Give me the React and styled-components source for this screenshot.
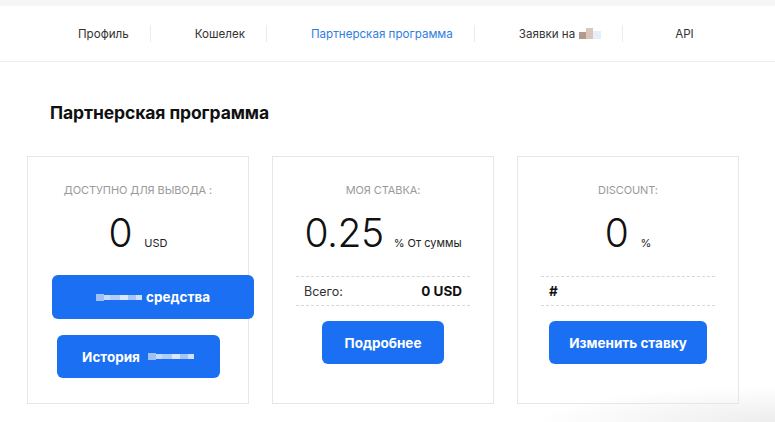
import React from "react";
import styled, { createGlobalStyle } from "styled-components";

const GlobalStyle = createGlobalStyle`
  html, body {
    margin: 0;
    padding: 0;
    background: #fff;
  }
  body {
    font-family: Inter, "Noto Sans", sans-serif;
    color: #1b1b1b;
  }
`;

const Page = styled.div`
  min-height: 422px;
  background: radial-gradient(ellipse 240px 36px at 100% 100%, #ededed, rgba(255, 255, 255, 0));
`;

const TopStrip = styled.div`
  height: 6px;
  background: #f6f6f6;
`;

const Nav = styled.nav`
  height: 55px;
  border-bottom: 1px solid #ededed;
  display: flex;
  align-items: center;
  padding-left: 78px;
`;

const NavItem = styled.a`
  display: flex;
  align-items: center;
  height: 17px;
  padding: 0 21px 0 44px;
  font-size: 11.6px;
  color: ${(p) => (p.$active ? "#2f7de1" : "#333")};
  border-right: 1px solid ${(p) => (p.$last ? "transparent" : "#ececec")};
  white-space: nowrap;
  text-decoration: none;
  &:first-child {
    padding-left: 0;
  }
  &:last-child {
    padding-left: 52px;
  }
`;

const Censor = styled.span`
  display: inline-flex;
  align-items: ${(p) => p.$align || "center"};
  margin: ${(p) => p.$margin || "0"};
`;

const Pix = styled.span`
  display: inline-block;
  width: ${(p) => p.$w}px;
  height: ${(p) => p.$h}px;
  background: ${(p) => p.$c};
`;

const Main = styled.main`
  padding: 0 0 0 27px;
`;

const Heading = styled.h1`
  margin: 0;
  padding: 40px 0 0 23px;
  height: 54px;
  line-height: 22px;
  font-size: 17.5px;
  font-weight: 700;
  color: #111;
  letter-spacing: -0.1px;
`;

const Cards = styled.div`
  display: flex;
  gap: 23px;
`;

const Card = styled.section`
  box-sizing: border-box;
  width: 222px;
  height: 248px;
  border: 1px solid #e6e6e6;
  padding: 26px 23px 0;
  display: flex;
  flex-direction: column;
  align-items: center;
`;

const Label = styled.div`
  font-size: 11px;
  line-height: 14px;
  color: #9a9a9a;
  text-transform: uppercase;
  letter-spacing: -0.1px;
`;

const ValueRow = styled.div`
  margin-top: 11px;
  height: 50px;
  display: flex;
  align-items: baseline;
  justify-content: center;
`;

const Big = styled.span`
  font-size: 39px;
  font-weight: 300;
  line-height: 50px;
  color: #111;
  letter-spacing: -0.5px;
`;

const Unit = styled.span`
  font-size: 11px;
  margin-left: ${(p) => p.$gap || 12}px;
  color: #222;
`;

const Button = styled.button`
  box-sizing: border-box;
  width: ${(p) => p.$w}px;
  height: ${(p) => p.$h || 43}px;
  margin-top: ${(p) => p.$mt}px;
  align-self: ${(p) => (p.$shift ? "flex-start" : "center")};
  margin-left: ${(p) => p.$shift || 0}px;
  flex-shrink: 0;
  border: 0;
  border-radius: 6px;
  background: #1a6ff2;
  color: #fff;
  font-family: Inter, "Noto Sans", sans-serif;
  font-size: 13.5px;
  font-weight: 700;
  display: flex;
  align-items: center;
  justify-content: center;
  padding: 0;
`;

const Line = styled.div`
  align-self: stretch;
  margin-top: 18px;
  height: 28px;
  border-top: 1px dashed #d8d8d8;
  border-bottom: 1px dashed #d8d8d8;
  display: flex;
  align-items: center;
  justify-content: space-between;
  padding: 0 8px;
  font-size: 12.5px;
  color: #333;
`;

const Strong = styled.span`
  font-weight: 700;
  font-size: 13.5px;
  color: #111;
`;

function NavCensor() {
  return (
    <Censor $align="flex-end" $margin="0 0 0 4px">
      <Pix $w={7} $h={7} $c="#b39a8d" />
      <Pix $w={7} $h={11} $c="#d9c6bd" />
      <Pix $w={8} $h={8} $c="#e6eef8" />
    </Censor>
  );
}

function ButtonCensor({ margin }) {
  return (
    <Censor $margin={margin}>
      <Pix $w={8} $h={7} $c="#9fc0f7" />
      <Pix $w={6} $h={5} $c="#c6dafb" />
      <Pix $w={10} $h={5} $c="#b2cdf9" />
      <Pix $w={8} $h={5} $c="#dbe7fd" />
      <Pix $w={8} $h={5} $c="#a7c5f8" />
      <Pix $w={6} $h={5} $c="#cfe0fc" />
    </Censor>
  );
}

export default function App() {
  return (
    <Page>
      <GlobalStyle />
      <TopStrip />
      <Nav>
        <NavItem>Профиль</NavItem>
        <NavItem>Кошелек</NavItem>
        <NavItem $active>Партнерская программа</NavItem>
        <NavItem>
          Заявки на
          <NavCensor />
        </NavItem>
        <NavItem $last>API</NavItem>
      </Nav>
      <Main>
        <Heading>Партнерская программа</Heading>
        <Cards>
          <Card>
            <Label>Доступно для вывода :</Label>
            <ValueRow>
              <Big>0</Big>
              <Unit>USD</Unit>
            </ValueRow>
            <Button $w={202} $h={44} $mt={17} $shift={1}>
              <ButtonCensor margin="0 4px 0 0" />
              средства
            </Button>
            <Button $w={163} $mt={16}>
              История
              <ButtonCensor margin="0 0 0 8px" />
            </Button>
          </Card>
          <Card>
            <Label>Моя ставка:</Label>
            <ValueRow>
              <Big>0.25</Big>
              <Unit $gap={10}>% От суммы</Unit>
            </ValueRow>
            <Line>
              <span>Всего:</span>
              <Strong>0 USD</Strong>
            </Line>
            <Button $w={122} $mt={15}>
              Подробнее
            </Button>
          </Card>
          <Card>
            <Label>Discount:</Label>
            <ValueRow>
              <Big>0</Big>
              <Unit>%</Unit>
            </ValueRow>
            <Line>
              <Strong>#</Strong>
            </Line>
            <Button $w={158} $mt={15}>
              Изменить ставку
            </Button>
          </Card>
        </Cards>
      </Main>
    </Page>
  );
}
